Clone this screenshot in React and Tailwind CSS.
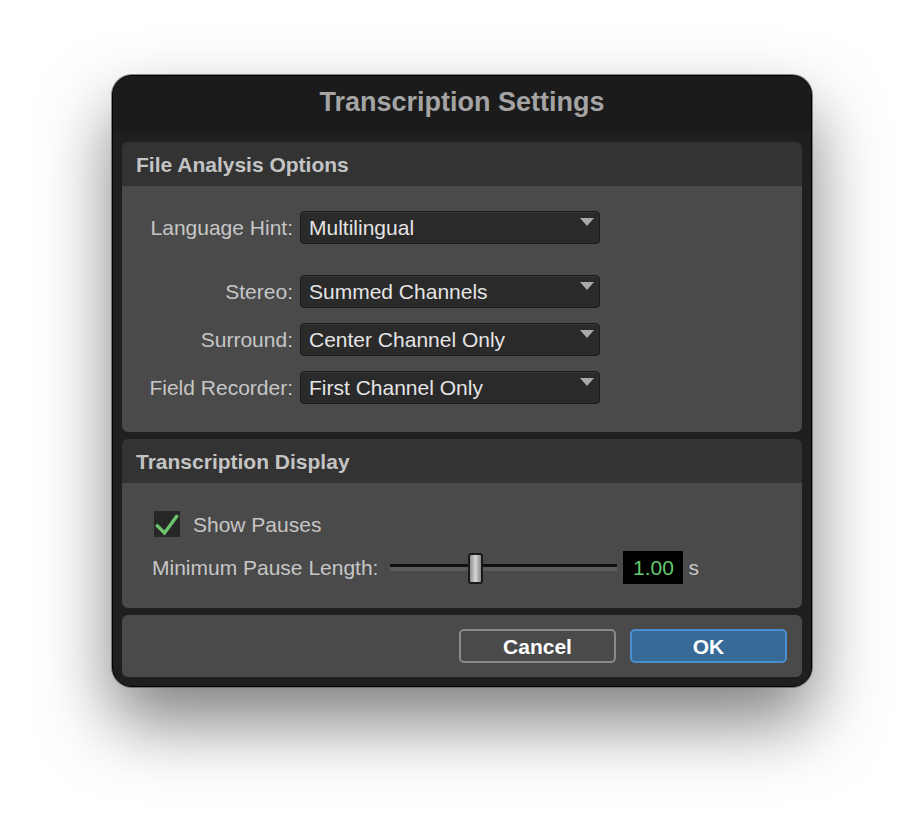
import React, { useState } from 'react';

const Dropdown = ({ value }) => (
  <div className="relative w-[300px] h-[33px] rounded-[4px] bg-[#2a2a2a] border border-[#1c1c1c] shadow-[inset_0_1px_0_rgba(255,255,255,0.06)] flex items-center pl-[8px] text-[21px] leading-none text-[#e4e4e4]">
    {value}
    <svg className="absolute right-[5px] top-[6px]" width="14" height="9" viewBox="0 0 14 9">
      <polygon points="0,0 14,0 7,8" fill="#a9a9a9" />
    </svg>
  </div>
);

const Row = ({ label, value }) => (
  <div className="flex items-center h-[33px]">
    <div className="w-[178px] pr-[7px] text-right text-[21px] leading-none text-[#c6c6c6]">{label}</div>
    <Dropdown value={value} />
  </div>
);

const SectionHeader = ({ children }) => (
  <div className="h-[44px] bg-[#333333] flex items-center pl-[14px] text-[21px] leading-none font-bold text-[#c4c4c4]">
    {children}
  </div>
);

export default function App() {
  const [showPauses, setShowPauses] = useState(true);

  return (
    <div className="min-h-screen bg-white flex items-start justify-center pt-[75px] font-['Liberation_Sans',Arial,sans-serif]">
      <div className="w-[700px] rounded-[20px] bg-[#1f1f1f] border border-black ring-1 ring-[#5a5a5a]/70 shadow-[0_35px_70px_rgba(0,0,0,0.5)] px-[9px] pb-[9px] overflow-hidden">
        {/* title bar */}
        <div className="-mx-[9px] h-[56px] bg-[#1b1b1b] flex items-center justify-center pb-[3px] text-[27px] leading-none font-bold text-[#a4a4a4]">
          Transcription Settings
        </div>

        {/* file analysis */}
        <div className="mt-[10px] rounded-[6px] overflow-hidden">
          <SectionHeader>File Analysis Options</SectionHeader>
          <div className="bg-[#4a4a4a] pt-[25px] pb-[28px] flex flex-col">
            <Row label="Language Hint:" value="Multilingual" />
            <div className="mt-[31px] flex flex-col gap-[15px]">
              <Row label="Stereo:" value="Summed Channels" />
              <Row label="Surround:" value="Center Channel Only" />
              <Row label="Field Recorder:" value="First Channel Only" />
            </div>
          </div>
        </div>

        {/* transcription display */}
        <div className="mt-[7px] rounded-[6px] overflow-hidden">
          <SectionHeader>Transcription Display</SectionHeader>
          <div className="bg-[#4a4a4a] pt-[28px] pb-[24px] flex flex-col items-start">
            <button
              onClick={() => setShowPauses(p => !p)}
              className="ml-[32px] h-[26px] flex items-center gap-[13px] text-[21px] leading-none text-[#c6c6c6]"
            >
              <span className="w-[26px] h-[26px] bg-[#272727] flex items-center justify-center">
                {showPauses && (
                  <svg width="26" height="26" viewBox="0 0 26 26">
                    <polyline points="3.5,15 10.5,22 22.5,5.5" fill="none" stroke="#6cc46e" strokeWidth="3.4" strokeLinecap="square" />
                  </svg>
                )}
              </span>
              Show Pauses
            </button>
            <div className="mt-[14px] ml-[30px] h-[33px] flex items-center">
              <span className="text-[21px] leading-none text-[#c6c6c6]">Minimum Pause Length:</span>
              <div className="relative ml-[12px] w-[227px] h-[33px]">
                <div className="absolute left-0 right-0 top-[13px] h-[3px] bg-[#111111]" />
                <div className="absolute left-0 right-0 top-[16px] h-[4px] bg-[#5c5c5c]" />
                <div className="absolute left-[78px] top-[2px] w-[15px] h-[31px] rounded-[3px] border-2 border-[#1a1a1a] bg-gradient-to-r from-[#8e8e8e] via-[#d6d6d6] to-[#8a8a8a]" />
              </div>
              <div className="ml-[6px] w-[60px] h-[33px] bg-black flex items-center justify-center text-[21px] leading-none text-[#63c76f]">
                1.00
              </div>
              <span className="ml-[5px] text-[21px] leading-none text-[#c6c6c6]">s</span>
            </div>
          </div>
        </div>

        {/* buttons */}
        <div className="mt-[7px] rounded-[6px] bg-[#4a4a4a] h-[62px] flex items-center justify-end gap-[14px] pr-[15px]">
          <button className="w-[157px] h-[34px] rounded-[5px] border-2 border-[#8a8a8a] text-[21px] leading-none font-bold text-white">
            Cancel
          </button>
          <button className="w-[157px] h-[34px] rounded-[5px] border-2 border-[#4a8fcd] bg-[#376a96] text-[21px] leading-none font-bold text-white">
            OK
          </button>
        </div>
      </div>
    </div>
  );
}
